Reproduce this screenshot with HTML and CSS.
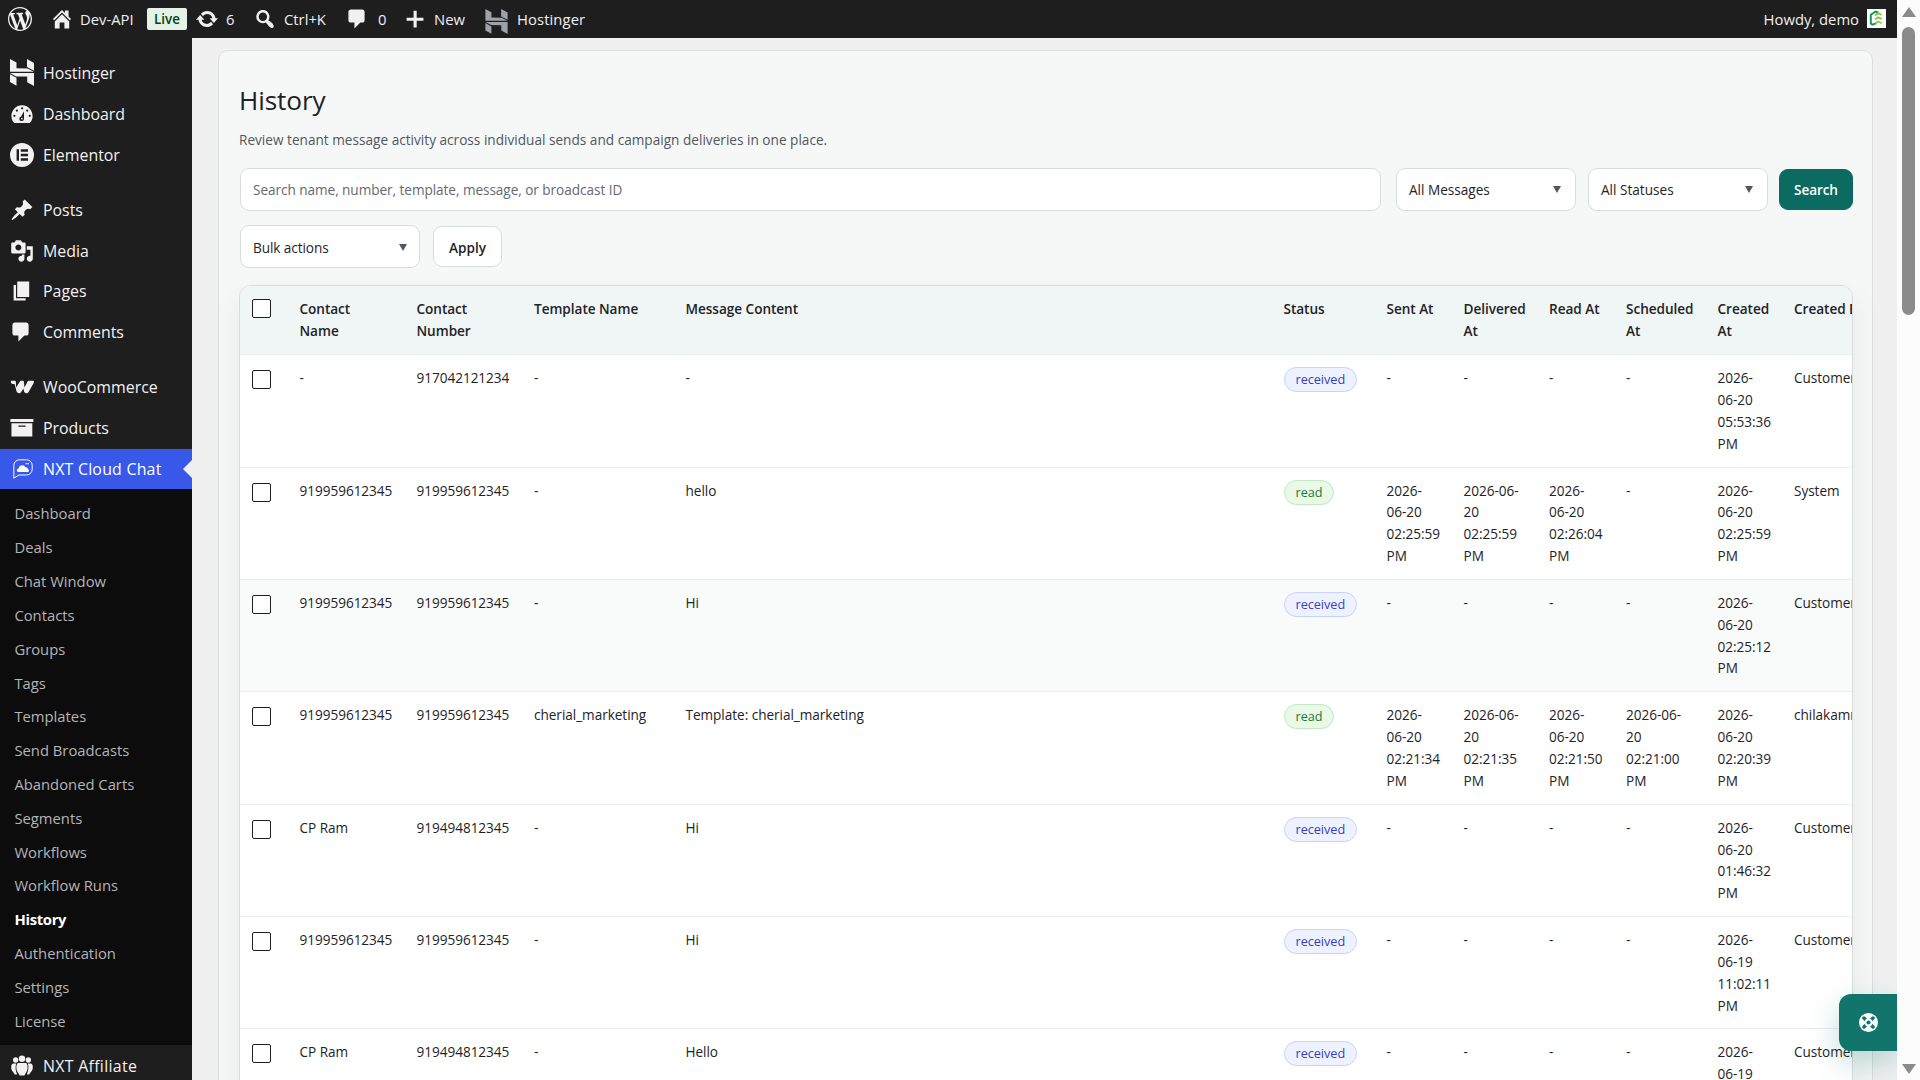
FILE: index.html
```
<!DOCTYPE html>
<html lang="en">
<head>
    <meta charset="UTF-8">
    <title>History</title>
    <link rel="stylesheet" href="styles.css">
</head>
<body>
<!-- shared icons -->
<svg class="defs">
    <symbol id="i-wp" viewBox="0 0 20 20"><path d="M20 10c0-5.510-4.490-10-10-10-5.520 0-10 4.490-10 10 0 5.520 4.480 10 10 10 5.510 0 10-4.480 10-10zM7.780 15.370l-3.410-9.220c0.550-0.020 1.170-0.080 1.170-0.080 0.500-0.060 0.440-1.130-0.060-1.110 0 0-1.450 0.110-2.370 0.110-0.180 0-0.370 0-0.580-0.010 1.580-2.410 4.300-3.950 7.470-3.950 2.330 0 4.450 0.870 6.050 2.340-0.680-0.110-1.650 0.390-1.650 1.580 0 0.740 0.450 1.360 0.900 2.100 0.350 0.610 0.550 1.360 0.550 2.460 0 1.490-1.400 5-1.400 5l-3.030-8.370c0.540-0.020 0.820-0.170 0.820-0.170 0.500-0.050 0.440-1.250-0.060-1.220 0 0-1.440 0.120-2.380 0.120-0.870 0-2.330-0.120-2.330-0.120-0.500-0.030-0.560 1.200-0.060 1.220l0.920 0.080 1.260 3.410zM17.410 10c0.240-0.640 0.740-1.870 0.430-4.250 0.700 1.290 1.050 2.710 1.050 4.250 0 3.290-1.730 6.240-4.400 7.780 0.970-2.590 1.940-5.200 2.920-7.780zM6.100 18.090c-2.980-1.440-5.050-4.530-5.050-8.090 0-1.310 0.230-2.500 0.720-3.620 1.420 3.900 2.840 7.810 4.330 11.710zM10.130 11.460l2.580 6.980c-0.860 0.290-1.760 0.450-2.710 0.450-0.790 0-1.570-0.110-2.290-0.330 0.810-2.380 1.620-4.740 2.420-7.100z"/></symbol>
    <symbol id="i-home" viewBox="0 0 20 20"><path d="M16 8.500l1.530 1.530-1.060 1.060-6.470-6.470-6.470 6.470-1.060-1.060 7.530-7.530 2.470 2.470v-1.970h3v4.970zM10 6.040l6 5.990v5.970h-4v-5h-4v5h-4v-5.970z"/></symbol>
    <symbol id="i-update" viewBox="0 0 20 20"><path d="M10.200 3.280c3.530 0 6.430 2.610 6.920 6h2.080l-3.500 4-3.500-4h2.320c-0.450-1.970-2.210-3.450-4.320-3.450-1.450 0-2.730 0.710-3.540 1.780l-1.710-1.950c1.280-1.460 3.150-2.380 5.250-2.380zM9.800 16.720c-3.520 0-6.430-2.610-6.920-6h-2.080l3.500-4 3.500 4h-2.320c0.450 1.970 2.210 3.450 4.320 3.450 1.450 0 2.730-0.710 3.540-1.780l1.710 1.950c-1.280 1.460-3.150 2.380-5.250 2.380z"/></symbol>
    <symbol id="i-search" viewBox="0 0 20 20"><path d="M12.140 4.180c1.870 1.870 2.110 4.750 0.720 6.890 0.120 0.100 0.220 0.210 0.360 0.310 0.200 0.160 0.470 0.360 0.810 0.590 0.340 0.240 0.560 0.390 0.660 0.470 0.420 0.310 0.730 0.570 0.940 0.780 0.320 0.320 0.600 0.650 0.840 1 0.250 0.350 0.440 0.690 0.590 1.040 0.140 0.350 0.210 0.680 0.180 1-0.020 0.320-0.140 0.590-0.360 0.810s-0.490 0.340-0.810 0.360c-0.310 0.020-0.650-0.040-0.990-0.190-0.350-0.140-0.700-0.340-1.040-0.590-0.350-0.240-0.680-0.520-1-0.840-0.210-0.210-0.470-0.520-0.770-0.930-0.100-0.130-0.250-0.350-0.470-0.660-0.220-0.320-0.400-0.570-0.560-0.780-0.160-0.200-0.290-0.350-0.440-0.500-2.070 1.090-4.690 0.760-6.440-0.980-2.140-2.150-2.140-5.640 0-7.780 2.150-2.150 5.630-2.150 7.780 0zM10.730 10.540c1.360-1.370 1.360-3.580 0-4.950-1.370-1.370-3.590-1.370-4.950 0-1.370 1.370-1.370 3.580 0 4.950 1.360 1.370 3.580 1.370 4.950 0z"/></symbol>
    <symbol id="i-comment" viewBox="0 0 20 20"><path d="M4 2h9.500c1.100 0 2 0.900 2 2v7c0 1.100-0.900 2-2 2h-1.500l-5 5v-5h-3c-1.100 0-2-0.900-2-2v-7c0-1.100 0.900-2 2-2z"/></symbol>
    <symbol id="i-plus" viewBox="0 0 20 20"><path d="M17 9v2.500h-5.600v5.500h-2.600v-5.500h-5.800v-2.500h5.800v-5.800h2.600v5.800z"/></symbol>
    <symbol id="i-hostinger" viewBox="0 0 24 27"><path d="M0 0l6.500 3.500v5.800l11 .2 6.500 3.300h-24zM17 0l7 3.900v7.800l-7-3.700zM0 14h24v13l-6.800-3.700v-5.700l-11-.2zM0 15.200l6.500 3.600v7.900l-6.500-3.600z"/></symbol>
    <symbol id="i-dash" viewBox="1.200 2 17.600 17.600"><path fill-rule="evenodd" d="M3.760 18h12.480c1.100-1.370 2.260-3.110 2.260-5.500 0-4.800-3.800-8.700-8.500-8.700s-8.500 3.900-8.500 8.700c0 2.390 1.160 4.130 2.260 5.500zM9.200 6.200a.9.900 0 1 1 1.800 0 .9.900 0 1 1-1.800 0zM5 8a.9.900 0 1 1 1.800 0 .9.900 0 1 1-1.800 0zM13.300 8a.9.900 0 1 1 1.800 0 .9.900 0 1 1-1.800 0zM3 12.200a.9.900 0 1 1 1.800 0 .9.900 0 1 1-1.800 0zM15.300 12.200a.9.900 0 1 1 1.800 0 .9.900 0 1 1-1.800 0zM11.600 8.500v5.800a1.900 1.900 0 1 1-2.300-1.600z"/><circle cx="9.900" cy="14.400" r=".7"/></symbol>
    <symbol id="i-elementor" viewBox="0 0 20 20"><path fill-rule="evenodd" d="M10 0a10 10 0 1 0 0 20 10 10 0 1 0 0-20zM5.500 5.200h2v9.600h-2zM9 5.200h6v2h-6zM9 9h6v2h-6zM9 12.800h6v2h-6z"/></symbol>
    <symbol id="i-pin" viewBox="0 0 20 20"><path d="M10.440 3.020l1.820-1.820 6.360 6.350-1.830 1.820c-1.050-0.680-2.480-0.570-3.410 0.360l-0.750 0.750c-0.920 0.930-1.040 2.350-0.350 3.410l-1.830 1.820-2.410-2.410-2.800 2.790c-0.420 0.420-3.380 2.710-3.800 2.290s1.860-3.390 2.280-3.810l2.790-2.790-2.410-2.410 1.830-1.820c1.050 0.690 2.480 0.570 3.400-0.360l0.750-0.750c0.930-0.920 1.050-2.350 0.360-3.420z"/></symbol>
    <symbol id="i-media" viewBox="0 0 20 20"><path fill-rule="evenodd" d="M13 11v-7c0-0.550-0.450-1-1-1h-1.670l-1.330-2h-4l-1.330 2h-1.670c-0.550 0-1 0.450-1 1v7c0 0.550 0.450 1 1 1h10c0.550 0 1-0.450 1-1zM7 4.500c1.380 0 2.500 1.120 2.500 2.500s-1.120 2.500-2.500 2.500-2.500-1.120-2.500-2.500 1.120-2.500 2.500-2.500zM14 6h5v10.500c0 1.380-1.120 2.500-2.500 2.500s-2.500-1.120-2.500-2.500 1.120-2.500 2.500-2.500c0.170 0 0.340 0.020 0.500 0.050v-5.050h-3v-3zM10 14.050v-1.050h2v3.500c0 1.380-1.120 2.500-2.500 2.500s-2.500-1.120-2.500-2.500 1.120-2.500 2.500-2.500z"/></symbol>
    <symbol id="i-pages" viewBox="0 0 20 20"><path d="M6 15v-13h10v13h-10zM5 16h8v2h-10v-13h2v11z"/></symbol>
    <symbol id="i-woo" viewBox="0 0 24 14"><path d="M1.200.8h3.500c.8 0 1.200.5 1.200 1.300l.2 5.300 3.800-6c.3-.4.600-.6 1.100-.6h1.700c.8 0 1.200.4 1.200 1.200l.5 5.400 3.200-5.900c.3-.5.700-.7 1.200-.7h3.800c1.200 0 1.700.9 1.200 1.900l-5.200 9.200c-.6.900-1.200 1.400-2.200 1.400-1.300 0-2.200-.9-2.500-2.200l-.4-2.600-2.500 3.800c-.4.700-1 1-1.900 1-1.300 0-2.300-.9-2.600-2.200l-1.900-7.100h-1.900c-1.500 0-2.500-3.200-1.500-3.200z"/></symbol>
    <symbol id="i-archive" viewBox="0 0 20 20"><path fill-rule="evenodd" d="M.3 2.500h19.200v2.600h-19.200zM1.200 6h17.400v11h-17.400zM7 8v.9h6v-.9z"/></symbol>
    <symbol id="i-nxt" viewBox="0 0 20 20"><path fill="none" stroke="currentColor" stroke-width="1" d="M.8 19.200V6.500C.8 3 3.500.8 6.500.8h7c3.500 0 5.700 2.700 5.700 5.700v3.700c0 3.500-2.700 5.800-5.700 5.800H6z"/><path d="M5.500 13c-2.200 0-2.200-3.200.2-3.400.2-4 5.600-4.600 6.700-1.300 2-.3 2.700 1 2.600 2 1.800.6 1 2.700-.3 2.700zM12.500 4.300h3.500v.9h-3.500z"/></symbol>
    <symbol id="i-groups" viewBox="0 0 20 20"><circle cx="10" cy="4" r="2.700"/><circle cx="4.700" cy="5" r="2.200"/><circle cx="15.300" cy="5" r="2.200"/><path d="M6.500 7.500h7c1.700 1.500 1.600 6.500-.5 8.500l-1 2h-4l-1-2c-2.100-2-2.200-7-.5-8.500zM2.500 8h2.600c-.8 3-.5 6 .8 9h-2c-.6-2-2.900-2.500-2.900-6 0-1.500.5-2.500 1.500-3zM17.500 8h-2.600c.8 3 .5 6-.8 9h2c.6-2 2.900-2.500 2.900-6 0-1.500-.5-2.500-1.500-3z"/></symbol>
</svg>

<div class="window">
    <div class="page">
        <div class="adminbar">
            <svg class="wp"><use href="#i-wp"/></svg>
            <div class="bar-item home"><svg><use href="#i-home"/></svg><span>Dev-API</span></div>
            <span class="live">Live</span>
            <div class="bar-item updates"><svg><use href="#i-update"/></svg><span>6</span></div>
            <div class="bar-item find"><svg><use href="#i-search"/></svg><span>Ctrl+K</span></div>
            <div class="bar-item talk"><svg><use href="#i-comment"/></svg><span>0</span></div>
            <div class="bar-item new"><svg><use href="#i-plus"/></svg><span>New</span></div>
            <div class="bar-item host"><svg><use href="#i-hostinger"/></svg><span>Hostinger</span></div>
            <div class="howdy"><span>Howdy, demo</span>
                <svg class="avatar" viewBox="0 0 20 20"><rect width="20" height="20" fill="#fff"/><path d="M9.500 15.200l-3.800 1.300-1.700-1.200V6l5-3.300 3 1" fill="none" stroke="#10935a" stroke-width="2"/><path d="M8.500 6.800l3-2.300 4 1.600M8.500 11l3-2.200 4 1.600M9 15.200l2.500-2 4 1.800" fill="none" stroke="#8fc43d" stroke-width="1.900"/></svg>
            </div>
        </div>

        <div class="body">
            <div class="sidebar">
                <ul class="menu">
                    <li><svg class="tall"><use href="#i-hostinger"/></svg>Hostinger</li>
                    <li><svg class="small"><use href="#i-dash"/></svg>Dashboard</li>
                    <li><svg><use href="#i-elementor"/></svg>Elementor</li>
                    <li class="gap"><svg><use href="#i-pin"/></svg>Posts</li>
                    <li><svg><use href="#i-media"/></svg>Media</li>
                    <li><svg><use href="#i-pages"/></svg>Pages</li>
                    <li><svg><use href="#i-comment"/></svg>Comments</li>
                    <li class="gap"><svg><use href="#i-woo"/></svg>WooCommerce</li>
                    <li><svg><use href="#i-archive"/></svg>Products</li>
                    <li class="current"><svg><use href="#i-nxt"/></svg>NXT Cloud Chat</li>
                </ul>
                <ul class="submenu">
                    <li>Dashboard</li>
                    <li>Deals</li>
                    <li>Chat Window</li>
                    <li>Contacts</li>
                    <li>Groups</li>
                    <li>Tags</li>
                    <li>Templates</li>
                    <li>Send Broadcasts</li>
                    <li>Abandoned Carts</li>
                    <li>Segments</li>
                    <li>Workflows</li>
                    <li>Workflow Runs</li>
                    <li class="on">History</li>
                    <li>Authentication</li>
                    <li>Settings</li>
                    <li>License</li>
                </ul>
                <ul class="menu last">
                    <li><svg><use href="#i-groups"/></svg>NXT Affiliate</li>
                </ul>
            </div>

            <div class="content">
                <div class="card">
                    <h1>History</h1>
                    <p class="intro">Review tenant message activity across individual sends and campaign deliveries in one place.</p>
                    <div class="filters">
                        <div class="field search">Search name, number, template, message, or broadcast ID</div>
                        <div class="field select">All Messages<i></i></div>
                        <div class="field select">All Statuses<i></i></div>
                        <div class="btn primary">Search</div>
                    </div>
                    <div class="bulk">
                        <div class="field select">Bulk actions<i></i></div>
                        <div class="btn">Apply</div>
                    </div>
                    <div class="table-wrap">
                        <table>
                            <colgroup>
                                <col class="c-check"><col class="c-name"><col class="c-number"><col class="c-template"><col class="c-message"><col class="c-status"><col class="c-sent"><col class="c-delivered"><col class="c-read"><col class="c-scheduled"><col class="c-created"><col class="c-by">
                            </colgroup>
                            <thead>
                            <tr><th><b class="box"></b></th><th>Contact<br>Name</th><th>Contact<br>Number</th><th>Template Name</th><th>Message Content</th><th>Status</th><th>Sent At</th><th>Delivered<br>At</th><th>Read At</th><th>Scheduled<br>At</th><th>Created<br>At</th><th>Created By</th></tr>
                            </thead>
                            <tbody>
                            <tr><td><b class="box"></b></td><td>-</td><td>917042121234</td><td>-</td><td>-</td><td><span class="tag received">received</span></td><td>-</td><td>-</td><td>-</td><td>-</td><td>2026-<br>06-20<br>05:53:36<br>PM</td><td>Customer</td></tr>
                            <tr><td><b class="box"></b></td><td>919959612345</td><td>919959612345</td><td>-</td><td>hello</td><td><span class="tag read">read</span></td><td>2026-<br>06-20<br>02:25:59<br>PM</td><td>2026-06-<br>20<br>02:25:59<br>PM</td><td>2026-<br>06-20<br>02:26:04<br>PM</td><td>-</td><td>2026-<br>06-20<br>02:25:59<br>PM</td><td>System</td></tr>
                            <tr class="hover"><td><b class="box"></b></td><td>919959612345</td><td>919959612345</td><td>-</td><td>Hi</td><td><span class="tag received">received</span></td><td>-</td><td>-</td><td>-</td><td>-</td><td>2026-<br>06-20<br>02:25:12<br>PM</td><td>Customer</td></tr>
                            <tr><td><b class="box"></b></td><td>919959612345</td><td>919959612345</td><td>cherial_marketing</td><td>Template: cherial_marketing</td><td><span class="tag read">read</span></td><td>2026-<br>06-20<br>02:21:34<br>PM</td><td>2026-06-<br>20<br>02:21:35<br>PM</td><td>2026-<br>06-20<br>02:21:50<br>PM</td><td>2026-06-<br>20<br>02:21:00<br>PM</td><td>2026-<br>06-20<br>02:20:39<br>PM</td><td>chilakamma</td></tr>
                            <tr><td><b class="box"></b></td><td>CP Ram</td><td>919494812345</td><td>-</td><td>Hi</td><td><span class="tag received">received</span></td><td>-</td><td>-</td><td>-</td><td>-</td><td>2026-<br>06-20<br>01:46:32<br>PM</td><td>Customer</td></tr>
                            <tr><td><b class="box"></b></td><td>919959612345</td><td>919959612345</td><td>-</td><td>Hi</td><td><span class="tag received">received</span></td><td>-</td><td>-</td><td>-</td><td>-</td><td>2026-<br>06-19<br>11:02:11<br>PM</td><td>Customer</td></tr>
                            <tr><td><b class="box"></b></td><td>CP Ram</td><td>919494812345</td><td>-</td><td>Hello</td><td><span class="tag received">received</span></td><td>-</td><td>-</td><td>-</td><td>-</td><td>2026-<br>06-19</td><td>Customer</td></tr>
                            </tbody>
                        </table>
                    </div>
                </div>
            </div>
        </div>
        <div class="help">
            <svg viewBox="0 0 20 20"><circle cx="10" cy="10" r="10" fill="#fff"/><path d="M5.200 5.200l9.600 9.600M14.800 5.200l-9.600 9.600" stroke="#12756b" stroke-width="3.600" stroke-linecap="round"/><circle cx="10" cy="10" r="4.100" fill="#fff"/><circle cx="10" cy="10" r="2.200" fill="#12756b"/></svg>
        </div>
    </div>

    <div class="scrollbar">
        <i class="up"></i>
        <div class="thumb"></div>
        <i class="down"></i>
    </div>
</div>
</body>
</html>
```
FILE: styles.css
```
* {
    box-sizing: border-box;
    margin: 0;
    padding: 0;
}

body {
    font-family: "Open Sans", "Noto Sans", sans-serif;
    font-size: 13.6px;
    color: #1d2327;
    background: #f0f0f1;
    overflow: hidden;
}

ul {
    list-style: none;
}

svg {
    fill: currentColor;
    flex: none;
}

.defs {
    position: absolute;
    width: 0;
    height: 0;
}

.window {
    display: flex;
    height: 1080px;
}

.page {
    flex: 1;
    display: flex;
    flex-direction: column;
    position: relative;
    overflow: hidden;
}

/* top bar */
.adminbar {
    height: 38px;
    flex: none;
    display: flex;
    align-items: center;
    background: #1e1e1e;
    color: #f0f0f1;
    font-size: 14.8px;
    padding: 0 11px 0 8px;
    white-space: nowrap;
}

.adminbar svg {
    width: 24px;
    height: 24px;
}

.bar-item {
    display: flex;
    align-items: center;
    gap: 7px;
}

.home {
    margin-left: 18px;
    width: 97px;
    gap: 6px;
}

.live {
    width: 40px;
    height: 22px;
    line-height: 22px;
    border-radius: 2px;
    background: #e6f2e8;
    color: #00450c;
    font-size: 13.4px;
    font-weight: 600;
    text-align: center;
}

.updates {
    margin-left: 8px;
    width: 58px;
}

.find {
    width: 93px;
}

.talk {
    width: 57px;
    gap: 8px;
}

.new {
    width: 82px;
}

.adminbar .host svg {
    height: 25px;
    width: 23px;
    color: #9ca2a7;
    margin: 4px 2px 0 0;
}

.host {
    letter-spacing: .1px;
}

.howdy {
    margin-left: auto;
    display: flex;
    align-items: center;
    gap: 8px;
}

.adminbar .avatar {
    width: 19px;
    height: 19px;
    margin-bottom: 1px;
}

.body {
    flex: 1;
    display: flex;
    min-height: 0;
}

/* left menu */
.sidebar {
    width: 192px;
    flex: none;
    background: #1e1e1e;
    padding-top: 14.800px;
}

.menu li {
    height: 40.800px;
    display: flex;
    align-items: center;
    gap: 9px;
    padding-left: 10px;
    font-size: 15.9px;
    color: #f3f1f1;
    white-space: nowrap;
    position: relative;
}

.menu svg {
    width: 24px;
    height: 24px;
}

.menu .tall {
    height: 27px;
    margin-bottom: 2px;
}

.menu .small {
    width: 22px;
    height: 22px;
    margin: 0 1px;
}

.menu .gap {
    margin-top: 14.300px;
}

.menu .current {
    background: #3858e9;
    color: #fff;
    letter-spacing: .22px;
}

.menu .current svg {
    width: 20px;
    height: 20px;
    margin: 0 1px 0 3px;
}

.menu .current::after {
    content: "";
    position: absolute;
    right: 0;
    top: 11px;
    border: 9.6px solid transparent;
    border-left: 0;
    border-right-color: #f0f0f1;
}

.last li {
    letter-spacing: .3px;
}

.submenu {
    background: #0c0c0c;
    padding: 8px 0 6.500px;
}

.submenu li {
    height: 33.840px;
    line-height: 33.840px;
    padding-left: 14.400px;
    font-size: 14.8px;
    color: #b5b5b5;
}

.submenu .on {
    color: #fff;
    font-weight: 700;
    letter-spacing: -.3px;
}

/* page content */
.content {
    flex: 1;
    min-width: 0;
    padding: 12px 24px 0 26px;
    background: #f0f0f1;
}

.card {
    height: 1100px;
    background: #f6f8f7;
    border: 1px solid #dcdee0;
    border-radius: 10px;
    padding: 31px 19px 0 20px;
}

h1 {
    font-size: 26.2px;
    font-weight: 400;
    line-height: 36px;
    letter-spacing: -.1px;
}

.intro {
    margin-top: 11px;
    line-height: 22px;
    color: #50575e;
    letter-spacing: .015px;
}

.filters, .bulk {
    display: flex;
    align-items: center;
    padding-left: 1px;
}

.filters {
    margin-top: 17px;
    gap: 12px;
}

.bulk {
    margin-top: 14px;
    gap: 13px;
}

.field {
    height: 43px;
    line-height: 42px;
    border: 1px solid #d9dcdd;
    border-radius: 9px;
    background: #fff;
    padding: 0 12px;
}

.search {
    flex: 1;
    margin-right: 3px;
    color: #646970;
    letter-spacing: -.05px;
}

.select {
    width: 180px;
    display: flex;
    align-items: center;
    justify-content: space-between;
}

.bulk .field {
    padding: 2px 10px 0 12px;
    letter-spacing: -.08px;
}

/* arrow of the dropdowns */
.select i {
    border: 4.5px solid transparent;
    border-top: 7px solid #50575e;
    border-bottom: 0;
    margin-right: 2px;
}

.btn {
    height: 41px;
    line-height: 40px;
    padding: 0 14px;
    border: 1px solid #d9dcdd;
    border-radius: 9px;
    background: #fff;
    font-weight: 600;
}

.bulk .btn {
    width: 69px;
    padding: 1px 0 0;
    text-align: center;
}

.primary {
    width: 74px;
    padding: 0;
    text-align: center;
    background: #0c6b60;
    border-color: #0c6b60;
    color: #fff;
}

.filters .primary {
    margin-left: -1px;
    letter-spacing: -.1px;
}

.table-wrap {
    margin-top: 17px;
    height: 900px;
    border: 1px solid #d9dcdd;
    border-radius: 12px;
    background: #fff;
    overflow: hidden;
    box-shadow: 0 12px 30px rgba(20, 40, 40, .07);
}

table {
    width: 1663px;
    table-layout: fixed;
    border-collapse: separate;
    border-spacing: 0;
}

.c-check { width: 47.500px; }
.c-name { width: 117px; }
.c-number { width: 117.500px; }
.c-template { width: 151.500px; }
.c-message { width: 598px; }
.c-status { width: 103px; }
.c-sent { width: 77px; }
.c-delivered { width: 85.500px; }
.c-read { width: 77px; }
.c-scheduled { width: 91.500px; }
.c-created { width: 76.500px; }
.c-by { width: 121px; }

th, td {
    padding: 12px 0 12px 12px;
    border-bottom: 1px solid #eaedee;
    line-height: 21.840px;
    text-align: left;
    vertical-align: top;
    white-space: nowrap;
}

th {
    background: #f0f5f6;
    font-weight: 600;
    padding-bottom: 12.500px;
    letter-spacing: -.04px;
}

td {
    letter-spacing: -.04px;
}

.hover td {
    background: #f9fbfa;
}

.box {
    display: block;
    width: 19px;
    height: 19px;
    margin-top: 3px;
    border: 1px solid #1e1e1e;
    border-radius: 2px;
    background: #fff;
}

th .box {
    margin-top: 1px;
}

.tag {
    display: inline-block;
    height: 25px;
    line-height: 23px;
    padding: 0 11px;
    border: 1px solid;
    border-radius: 13px;
    font-size: 12.7px;
    font-weight: 500;
}

.received {
    color: #3440c8;
    background: #eef2ff;
    border-color: #c7d2fe;
}

.read {
    color: #1c7a35;
    background: #eaf9e7;
    border-color: #bfe9c4;
}

/* floating help button */
.help {
    position: absolute;
    right: 0;
    bottom: 29px;
    width: 58px;
    height: 57px;
    border-radius: 12px 0 0 12px;
    background: #12756b;
    box-shadow: 0 12px 30px rgba(15, 118, 110, .25);
    display: flex;
    align-items: center;
    justify-content: center;
}

.help svg {
    width: 19px;
    height: 19px;
}

/* window scrollbar */
.scrollbar {
    width: 23px;
    background: #fcfcfc;
    display: flex;
    flex-direction: column;
    align-items: center;
    padding: 7px 0 6px;
}

.thumb {
    width: 13px;
    height: 288px;
    margin-top: 10px;
    border-radius: 7px;
    background: #8b8b8b;
}

.up, .down {
    border: 7px solid transparent;
}

.up {
    border-top: 0;
    border-bottom: 10px solid #8b8b8b;
}

.down {
    margin-top: auto;
    border-bottom: 0;
    border-top: 10px solid #8b8b8b;
}
```
